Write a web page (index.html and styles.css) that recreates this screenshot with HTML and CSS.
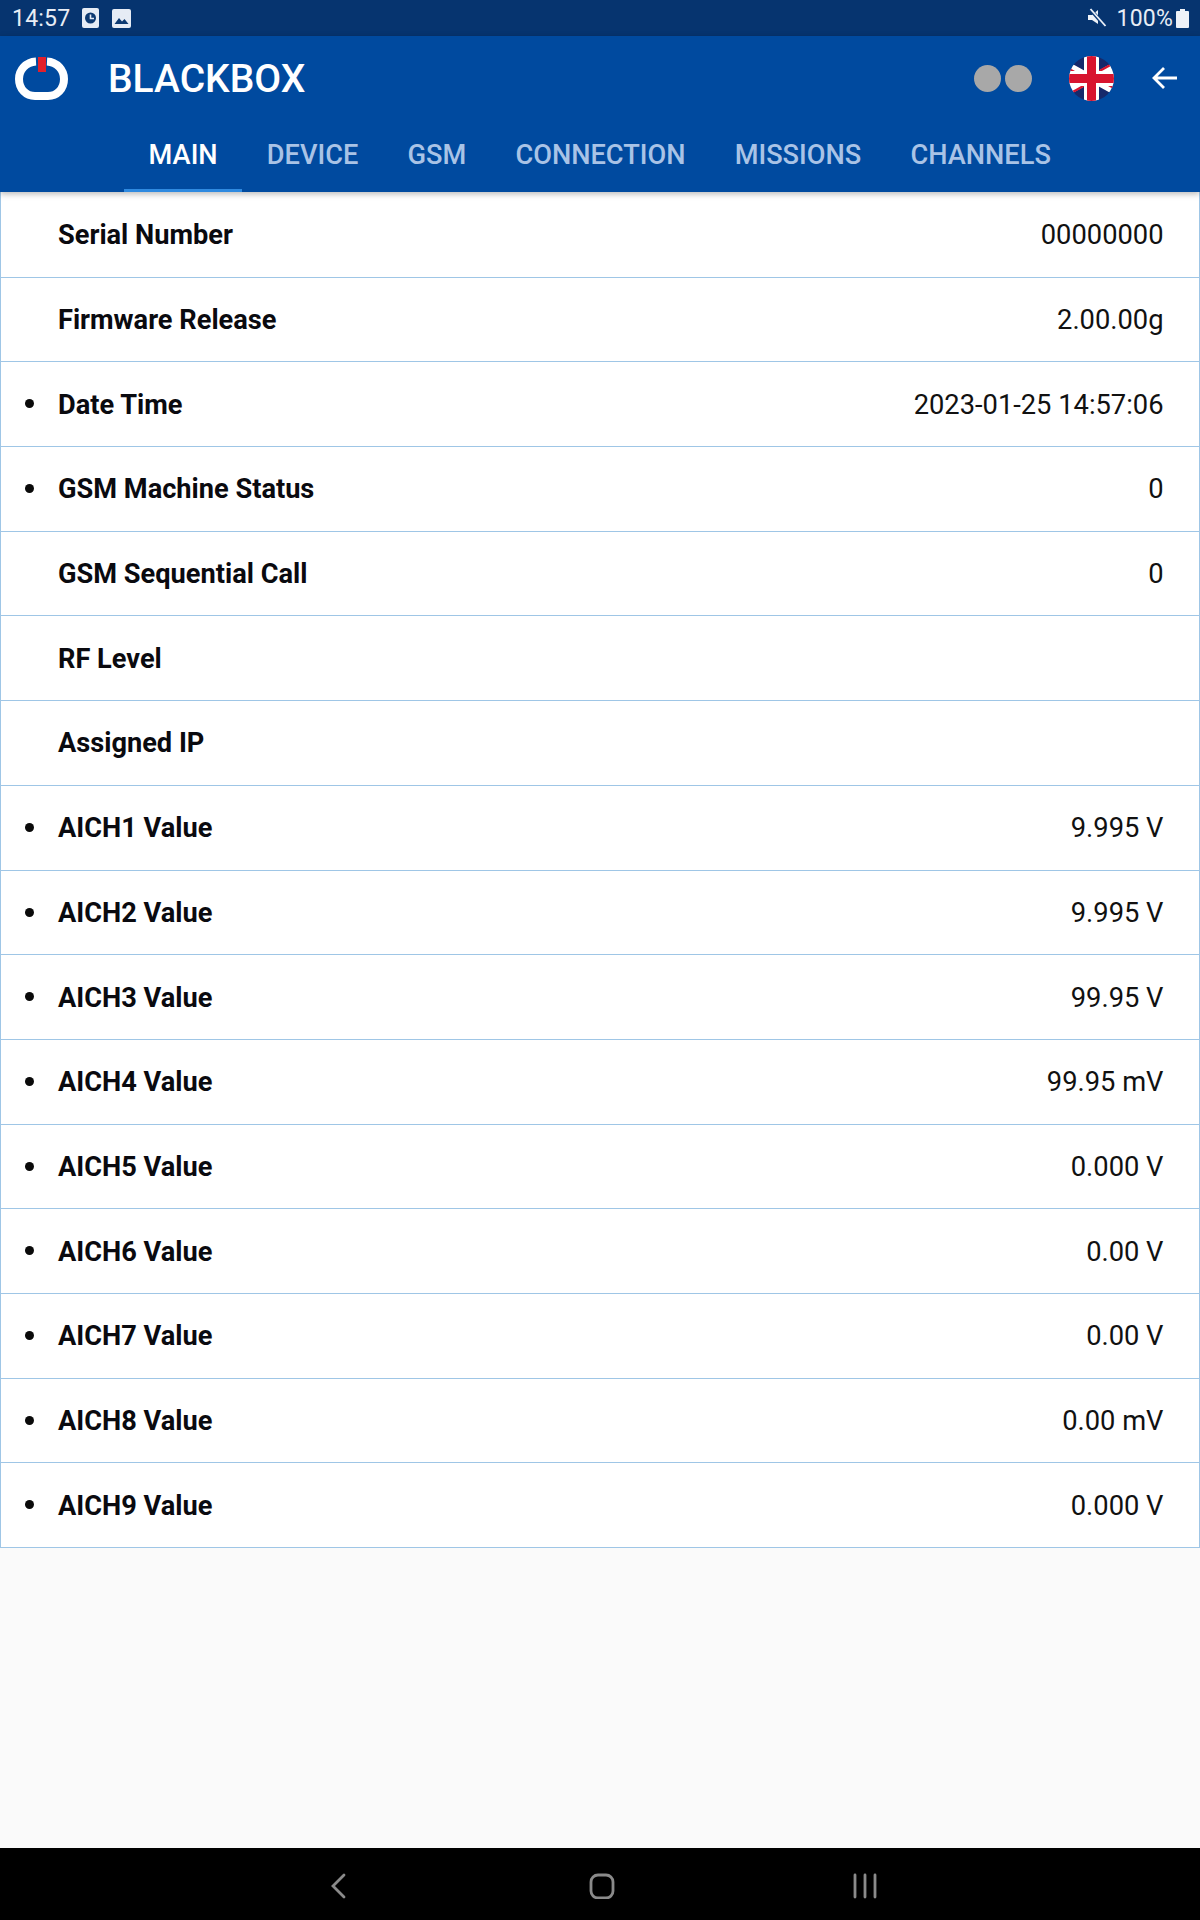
FILE: index.html
```html
<!DOCTYPE html>
<html lang="en">
<head>
<meta charset="utf-8">
<title>BLACKBOX</title>
<link rel="stylesheet" href="styles.css">
</head>
<body>
<div class="page">
  <div class="status">
    <div class="status-left">
      <span class="clock">14:57</span>
      <svg class="st-ico" width="17" height="20" viewBox="0 0 17 20"><rect x="0" y="0" width="17" height="20" rx="2" fill="#e6ecf5"/><circle cx="8.5" cy="10" r="5.5" fill="#0d3a72"/><path d="M8.5 6.5V10.5H12" stroke="#e6ecf5" stroke-width="1.6" fill="none"/></svg>
      <svg class="st-ico" width="19" height="19" viewBox="0 0 19 19"><rect width="19" height="19" rx="2" fill="#e6ecf5"/><path d="M2.5 15 L7 9 L10 12.5 L12.5 10 L16.5 15 Z" fill="#0d3a72"/></svg>
    </div>
    <div class="status-right">
      <svg width="20" height="20" viewBox="0 0 20 20"><path d="M1 7H5L11 2V16L5 12H1Z" fill="#eef2f8"/><path d="M3 1 L18 18" stroke="#0a3a78" stroke-width="3.6"/><path d="M3.5 1 L18.5 18" stroke="#eef2f8" stroke-width="1.8"/></svg>
      <span class="batt-text">100%</span>
      <svg width="13" height="19" viewBox="0 0 13 19"><path d="M4 0H9V2H12A1 1 0 0 1 13 3V18A1 1 0 0 1 12 19H1A1 1 0 0 1 0 18V3A1 1 0 0 1 1 2H4Z" fill="#eef2f8"/></svg>
    </div>
  </div>

  <header class="appbar">
    <div class="toolbar">
      <svg class="logo" width="54" height="45" viewBox="0 0 54 45">
        <path d="M21 4.5 C11 5 4 13 4 22 C4 32 11 39 20 39 H33 C42 39 49 32 49 22 C49 13 42 5 32 4.5" fill="none" stroke="#fff" stroke-width="8"/>
        <rect x="23" y="0" width="8" height="15" fill="#e2202c"/>
      </svg>
      <span class="title">BLACKBOX</span>
      <div class="leds"><span class="led"></span><span class="led"></span></div>
      <svg class="flag" width="45" height="45" viewBox="0 0 45 45">
        <defs><clipPath id="round"><circle cx="22.5" cy="22.5" r="22.5"/></clipPath></defs>
        <g clip-path="url(#round)">
          <rect width="45" height="45" fill="#16296b"/>
          <path d="M0 10 L45 35 M45 10 L0 35" stroke="#fff" stroke-width="7"/>
          <path d="M0 13 L18 23 M45 32 L27 22 M45 7 L27 17 M0 38 L18 28" stroke="#d8142f" stroke-width="2.4"/>
          <rect x="15" width="15" height="45" fill="#fff"/>
          <rect y="15" width="45" height="15" fill="#fff"/>
          <rect x="18" width="9" height="45" fill="#d8142f"/>
          <rect y="18" width="45" height="9" fill="#d8142f"/>
        </g>
      </svg>
      <svg class="back" width="26" height="24" viewBox="0 0 26 24"><path d="M12 2 L2 12 L12 22 M2 12 H25" fill="none" stroke="#fff" stroke-width="2.8"/></svg>
    </div>
    <nav class="tabs">
      <span class="tab active">MAIN</span>
      <span class="tab">DEVICE</span>
      <span class="tab">GSM</span>
      <span class="tab">CONNECTION</span>
      <span class="tab">MISSIONS</span>
      <span class="tab">CHANNELS</span>
    </nav>
  </header>

  <main class="list">
    <div class="row"><span class="label">Serial Number</span><span class="value">00000000</span></div>
    <div class="row"><span class="label">Firmware Release</span><span class="value">2.00.00g</span></div>
    <div class="row dot"><span class="label">Date Time</span><span class="value">2023-01-25 14:57:06</span></div>
    <div class="row dot"><span class="label">GSM Machine Status</span><span class="value">0</span></div>
    <div class="row"><span class="label">GSM Sequential Call</span><span class="value">0</span></div>
    <div class="row"><span class="label">RF Level</span><span class="value"></span></div>
    <div class="row"><span class="label">Assigned IP</span><span class="value"></span></div>
    <div class="row dot"><span class="label">AICH1 Value</span><span class="value">9.995 V</span></div>
    <div class="row dot"><span class="label">AICH2 Value</span><span class="value">9.995 V</span></div>
    <div class="row dot"><span class="label">AICH3 Value</span><span class="value">99.95 V</span></div>
    <div class="row dot"><span class="label">AICH4 Value</span><span class="value">99.95 mV</span></div>
    <div class="row dot"><span class="label">AICH5 Value</span><span class="value">0.000 V</span></div>
    <div class="row dot"><span class="label">AICH6 Value</span><span class="value">0.00 V</span></div>
    <div class="row dot"><span class="label">AICH7 Value</span><span class="value">0.00 V</span></div>
    <div class="row dot"><span class="label">AICH8 Value</span><span class="value">0.00 mV</span></div>
    <div class="row dot"><span class="label">AICH9 Value</span><span class="value">0.000 V</span></div>
  </main>

  <footer class="navbar">
    <svg width="16" height="26" viewBox="0 0 16 26"><path d="M14 2 L3 13 L14 24" fill="none" stroke="#8a8a8a" stroke-width="2.8" stroke-linecap="round"/></svg>
    <svg class="nav-home" width="26" height="26" viewBox="0 0 26 26"><rect x="2" y="2" width="22" height="23" rx="7" fill="none" stroke="#8a8a8a" stroke-width="2.8"/></svg>
    <svg width="24" height="26" viewBox="0 0 24 26"><path d="M2 2V24M12 2V24M22 2V24" fill="none" stroke="#8a8a8a" stroke-width="2.8" stroke-linecap="round"/></svg>
  </footer>
</div>
</body>
</html>
```

FILE: styles.css
```css
* { box-sizing: border-box; }
html, body { margin: 0; padding: 0; }
body { font-family: Roboto, "Liberation Sans", sans-serif; background: #fafafa; }
.page { width: 1200px; height: 1920px; display: flex; flex-direction: column; overflow: hidden; }

.status { height: 36px; flex: none; background: #06346f; color: #e8edf5; display: flex; justify-content: space-between; align-items: center; padding: 0 11px 0 12px; }
.status-left { display: flex; align-items: center; }
.clock { font-size: 23px; margin-right: 12px; letter-spacing: 0.2px; }
.st-ico { margin-right: 13px; }
.status-right { display: flex; align-items: center; }
.batt-text { font-size: 23px; margin: 0 3px 0 10px; letter-spacing: 0.2px; }

.appbar { height: 156px; flex: none; background: #004a9f; display: flex; flex-direction: column; position: relative; z-index: 1; box-shadow: 0 2px 6px rgba(0,0,0,.28); }
.toolbar { height: 84px; flex: none; display: flex; align-items: center; padding: 0 22.5px 0 15px; }
.logo { flex: none; margin-top: 2px; }
.title { font-size: 39px; font-weight: 500; color: #fff; margin-left: 39px; padding-top: 2px; flex: 1; }
.leds { display: flex; gap: 4px; margin-right: 37px; }
.led { width: 27px; height: 27px; border-radius: 50%; background: #a8a8a8; }
.flag { flex: none; margin-right: 37.5px; }
.back { flex: none; }

.tabs { flex: 1; display: flex; padding-left: 124px; }
.tab { padding: 0 24.6px; font-size: 27.2px; font-weight: 500; color: #a9c3e6; display: flex; align-items: center; border-bottom: 3px solid transparent; }
.tab.active { color: #fff; border-bottom-color: #2f8ae0; }

.list { background: #fff; display: flex; flex-direction: column; padding-top: 1px; border-left: 1px solid #9fc6e6; border-right: 1px solid #9fc6e6; }
.row { height: 84.69px; flex: none; display: flex; justify-content: space-between; align-items: center; padding: 1px 35.5px 0 57px; border-bottom: 1.5px solid #9fc6e6; position: relative; color: #000; }
.row.dot::before { content: ""; position: absolute; left: 23.5px; top: 37px; width: 9px; height: 9px; border-radius: 50%; background: #0a0a0a; }
.label { font-size: 27.2px; font-weight: 700; color: #0a0a0f; }
.value { font-size: 27.3px; color: #111; }

.navbar { margin-top: auto; height: 72px; flex: none; background: #000; display: flex; justify-content: center; align-items: center; gap: 240.5px; padding-left: 7px; padding-top: 3px; }
.nav-home { margin: 0 -2px 0 2px; }
```
